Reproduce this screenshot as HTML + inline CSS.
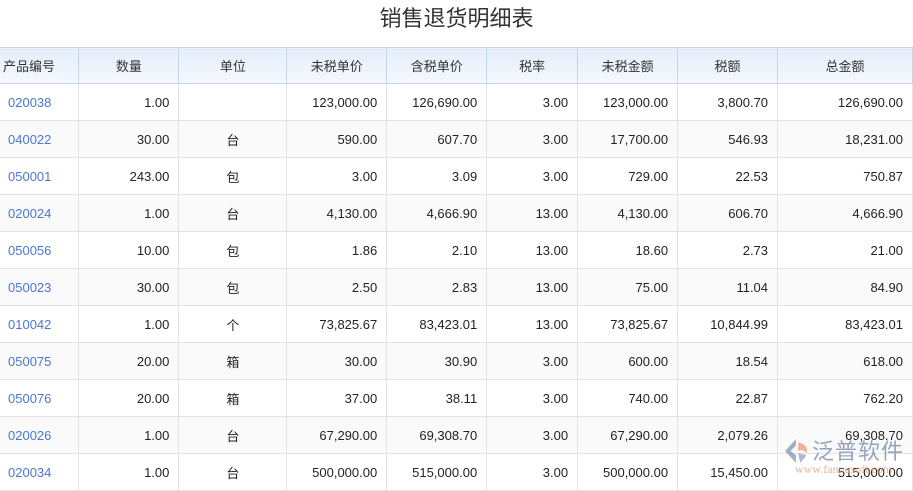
<!DOCTYPE html>
<html><head><meta charset="utf-8"><style>
body{margin:0;width:913px;height:485px;overflow:hidden;background:#fff;font-family:"Liberation Sans","Noto Sans CJK SC",sans-serif;position:relative}
h1{margin:0;position:absolute;top:3px;left:0;width:913px;text-align:center;font-weight:normal;font-size:22px;color:#333;line-height:32px}
table{position:absolute;top:47px;left:0;border-collapse:collapse;table-layout:fixed;font-size:13px;color:#222}
th{height:35px;background:linear-gradient(#e5edfa,#f5f8fe);border:1px solid #c6d6ea;font-weight:normal;color:#333;text-align:center;padding:0}
td{height:36px;border:1px solid #e3e3e3;padding:0 9px;text-align:right}
tr:nth-child(odd) td{background:#fafafa}
td:first-child{text-align:left;color:#4a78d0;padding-left:8px}
td:nth-child(3){text-align:center}
th:first-child{text-align:left;padding-left:3px;border-left:none}
td:first-child{border-left:none}
.logo{position:absolute;left:783px;top:436px;width:130px;height:40px}
</style></head><body>
<h1>销售退货明细表</h1>
<table>
<colgroup><col style="width:79px"><col style="width:100px"><col style="width:108px"><col style="width:100px"><col style="width:100px"><col style="width:91px"><col style="width:100px"><col style="width:100px"><col style="width:135px"></colgroup>
<tr><th>产品编号</th><th>数量</th><th>单位</th><th>未税单价</th><th>含税单价</th><th>税率</th><th>未税金额</th><th>税额</th><th>总金额</th></tr>
<tr><td>020038</td><td>1.00</td><td></td><td>123,000.00</td><td>126,690.00</td><td>3.00</td><td>123,000.00</td><td>3,800.70</td><td>126,690.00</td></tr>
<tr><td>040022</td><td>30.00</td><td>台</td><td>590.00</td><td>607.70</td><td>3.00</td><td>17,700.00</td><td>546.93</td><td>18,231.00</td></tr>
<tr><td>050001</td><td>243.00</td><td>包</td><td>3.00</td><td>3.09</td><td>3.00</td><td>729.00</td><td>22.53</td><td>750.87</td></tr>
<tr><td>020024</td><td>1.00</td><td>台</td><td>4,130.00</td><td>4,666.90</td><td>13.00</td><td>4,130.00</td><td>606.70</td><td>4,666.90</td></tr>
<tr><td>050056</td><td>10.00</td><td>包</td><td>1.86</td><td>2.10</td><td>13.00</td><td>18.60</td><td>2.73</td><td>21.00</td></tr>
<tr><td>050023</td><td>30.00</td><td>包</td><td>2.50</td><td>2.83</td><td>13.00</td><td>75.00</td><td>11.04</td><td>84.90</td></tr>
<tr><td>010042</td><td>1.00</td><td>个</td><td>73,825.67</td><td>83,423.01</td><td>13.00</td><td>73,825.67</td><td>10,844.99</td><td>83,423.01</td></tr>
<tr><td>050075</td><td>20.00</td><td>箱</td><td>30.00</td><td>30.90</td><td>3.00</td><td>600.00</td><td>18.54</td><td>618.00</td></tr>
<tr><td>050076</td><td>20.00</td><td>箱</td><td>37.00</td><td>38.11</td><td>3.00</td><td>740.00</td><td>22.87</td><td>762.20</td></tr>
<tr><td>020026</td><td>1.00</td><td>台</td><td>67,290.00</td><td>69,308.70</td><td>3.00</td><td>67,290.00</td><td>2,079.26</td><td>69,308.70</td></tr>
<tr><td>020034</td><td>1.00</td><td>台</td><td>500,000.00</td><td>515,000.00</td><td>3.00</td><td>500,000.00</td><td>15,450.00</td><td>515,000.00</td></tr>
</table>
<div class="logo">
<svg width="28" height="26" style="position:absolute;left:0;top:2px" viewBox="0 0 26 24"><path d="M12 1 L2 12 L12 23 L12 16 L7 12 L12 7Z" fill="#8a9bb8" opacity=".8"/><path d="M14 4 Q24 6 22 14 Q18 10 14 12Z" fill="#e8a27c" opacity=".8"/><path d="M14 14 L22 16 L16 23Z" fill="#8a9bb8" opacity=".7"/></svg>
<div style="position:absolute;left:29px;top:-2px;font-size:22px;color:#8a9bb8;letter-spacing:1px;opacity:.9">泛普软件</div>
<div style="position:absolute;left:12px;top:26px;font-size:12px;color:#e8a27c;font-family:'Liberation Serif',serif;opacity:.8">www.fanpusoft.com</div>
</div>
</body></html>
